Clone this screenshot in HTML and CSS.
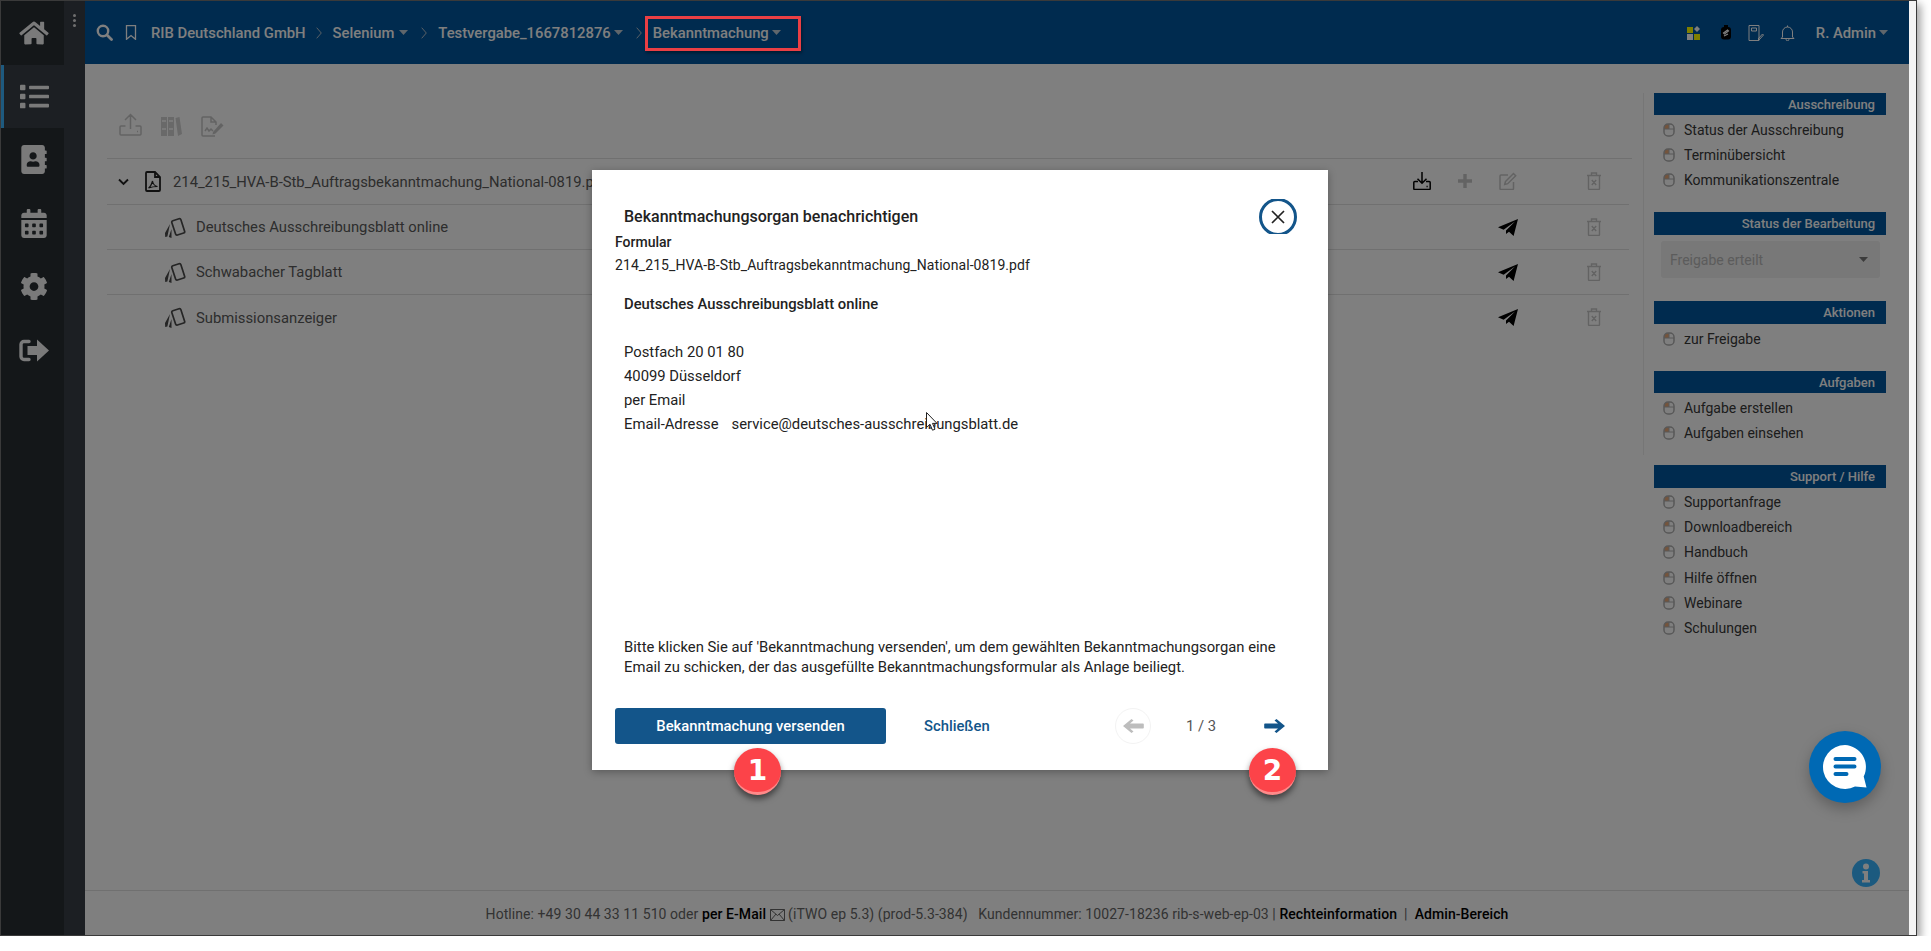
FILE: index.html
```html
<!DOCTYPE html>
<html lang="de">
<head>
  <meta charset="UTF-8">
  <title>Bekanntmachung</title>
  <link rel="stylesheet" href="styles.css">
</head>
<body>
  <svg class="defs" width="0" height="0">
    <symbol id="i-mouse" viewBox="0 0 12 14">
      <path d="M1 6h5V1H5a4 4 0 0 0-4 4z" fill="#e8a878"/>
      <rect x="1" y="1" width="10" height="12" rx="4" fill="none" stroke="#b0b0b0" stroke-width="1.500"/>
      <path d="M1 6h10M6 1v5" stroke="#b0b0b0" stroke-width="1"/>
    </symbol>
    <symbol id="i-trash" viewBox="0 0 16 18">
      <path d="M1 3.500h14M5.500 3.500V1h5v2.500M2.500 3.500v13a1 1 0 0 0 1 1h9a1 1 0 0 0 1-1v-13M5.800 8l4.400 5M10.200 8l-4.400 5" fill="none" stroke="#c6c6c6" stroke-width="1.400"/>
    </symbol>
    <symbol id="i-plane" viewBox="0 0 20 17">
      <path d="M20 0 0 8.200l5.600 2.600L17 2.400 8 11.600V15l3-2.200 4.600 4.200z"/>
    </symbol>
    <symbol id="i-organ" viewBox="0 0 22 21">
      <rect x="9.500" y="2.500" width="9.500" height="15" rx="1.500" transform="rotate(-18 14 10)" fill="none" stroke="#4a4a4a" stroke-width="1.700"/>
      <path d="M6 7 1 16l.2 4 2.200-.4zM7.500 12 4.800 20l2.700.9z" fill="#4a4a4a"/>
    </symbol>
    <symbol id="i-caret" viewBox="0 0 9 5">
      <path d="M0 0h9L4.500 5z"/>
    </symbol>
    <symbol id="i-sep" viewBox="0 0 6 12">
      <path d="M.7.700 5.300 6 .7 11.300" fill="none" stroke="#b4c0cc" stroke-width="1"/>
    </symbol>
    <symbol id="i-arrow" viewBox="0 0 21 14">
      <path d="M10.500 1.500 12.500 0 21 7l-8.500 7-2-1.500L14 9.500H1a.8.8 0 0 1-.8-.8V5.300A.8.8 0 0 1 1 4.500h13z"/>
    </symbol>
  </svg>

  <div class="window">
    <div class="app">
      <nav class="sidebar">
        <div class="nav-icons">
          <a class="nav-item"><svg width="30" height="26" viewBox="0 0 576 512"><path d="M280.37 148.26L96 300.11V464a16 16 0 0 0 16 16l112.06-.29a16 16 0 0 0 15.92-16V368a16 16 0 0 1 16-16h64a16 16 0 0 1 16 16v95.64a16 16 0 0 0 16 16.05L464 480a16 16 0 0 0 16-16V300L295.67 148.26a12.19 12.19 0 0 0-15.3 0zM571.6 251.47L488 182.56V44.05a12 12 0 0 0-12-12h-56a12 12 0 0 0-12 12v72.61L318.47 43a48 48 0 0 0-61 0L4.34 251.47a12 12 0 0 0-1.6 16.9l25.5 31A12 12 0 0 0 45.15 301l235.22-193.74a12.19 12.19 0 0 1 15.3 0L530.9 301a12 12 0 0 0 16.9-1.6l25.5-31a12 12 0 0 0-1.7-16.93z"/></svg></a>
          <a class="nav-item nav-item--active"><svg width="29" height="29" viewBox="0 0 512 512"><path d="M80 368H16a16 16 0 0 0-16 16v64a16 16 0 0 0 16 16h64a16 16 0 0 0 16-16v-64a16 16 0 0 0-16-16zm0-320H16A16 16 0 0 0 0 64v64a16 16 0 0 0 16 16h64a16 16 0 0 0 16-16V64a16 16 0 0 0-16-16zm0 160H16a16 16 0 0 0-16 16v64a16 16 0 0 0 16 16h64a16 16 0 0 0 16-16v-64a16 16 0 0 0-16-16zm416 176H176a16 16 0 0 0-16 16v32a16 16 0 0 0 16 16h320a16 16 0 0 0 16-16v-32a16 16 0 0 0-16-16zm0-320H176a16 16 0 0 0-16 16v32a16 16 0 0 0 16 16h320a16 16 0 0 0 16-16V80a16 16 0 0 0-16-16zm0 160H176a16 16 0 0 0-16 16v32a16 16 0 0 0 16 16h320a16 16 0 0 0 16-16v-32a16 16 0 0 0-16-16z"/></svg></a>
          <a class="nav-item"><svg width="26" height="29" viewBox="0 0 448 512"><path d="M436 160c6.600 0 12-5.400 12-12v-40c0-6.600-5.400-12-12-12h-20V48c0-26.500-21.500-48-48-48H48C21.500 0 0 21.500 0 48v416c0 26.500 21.500 48 48 48h320c26.500 0 48-21.500 48-48v-48h20c6.600 0 12-5.400 12-12v-40c0-6.600-5.400-12-12-12h-20v-64h20c6.600 0 12-5.400 12-12v-40c0-6.600-5.400-12-12-12h-20v-64h20zm-228-32c35.300 0 64 28.700 64 64s-28.700 64-64 64-64-28.700-64-64 28.700-64 64-64zm112 236.800c0 10.600-10 19.200-22.400 19.200H118.400C106 384 96 375.400 96 364.800v-19.200c0-31.800 30.100-57.600 67.200-57.600h5c12.300 5.100 25.700 8 39.800 8s27.600-2.900 39.800-8h5c37.100 0 67.200 25.800 67.200 57.600v19.200z"/></svg></a>
          <a class="nav-item"><svg width="26" height="29" viewBox="0 0 448 512"><path d="M0 464c0 26.500 21.500 48 48 48h352c26.500 0 48-21.500 48-48V192H0v272zm320-196c0-6.600 5.400-12 12-12h40c6.600 0 12 5.400 12 12v40c0 6.600-5.400 12-12 12h-40c-6.600 0-12-5.400-12-12v-40zm0 128c0-6.600 5.400-12 12-12h40c6.600 0 12 5.400 12 12v40c0 6.600-5.400 12-12 12h-40c-6.600 0-12-5.400-12-12v-40zM192 268c0-6.600 5.400-12 12-12h40c6.600 0 12 5.400 12 12v40c0 6.600-5.400 12-12 12h-40c-6.600 0-12-5.400-12-12v-40zm0 128c0-6.600 5.400-12 12-12h40c6.600 0 12 5.400 12 12v40c0 6.600-5.400 12-12 12h-40c-6.600 0-12-5.400-12-12v-40zM64 268c0-6.600 5.400-12 12-12h40c6.600 0 12 5.400 12 12v40c0 6.600-5.400 12-12 12H76c-6.600 0-12-5.400-12-12v-40zm0 128c0-6.600 5.400-12 12-12h40c6.600 0 12 5.400 12 12v40c0 6.600-5.400 12-12 12H76c-6.600 0-12-5.400-12-12v-40zM400 64h-48V16c0-8.800-7.200-16-16-16h-32c-8.800 0-16 7.200-16 16v48H160V16c0-8.800-7.200-16-16-16h-32c-8.800 0-16 7.200-16 16v48H48C21.500 64 0 85.500 0 112v48h448v-48c0-26.500-21.500-48-48-48z"/></svg></a>
          <a class="nav-item"><svg width="28" height="29" viewBox="0 0 512 512"><path d="M487.400 315.700l-42.600-24.600c4.300-23.200 4.300-47 0-70.200l42.600-24.600c4.900-2.800 7.100-8.600 5.500-14-11.100-35.600-30-67.800-54.700-94.600-3.800-4.100-10-5.100-14.800-2.300L380.800 110c-17.900-15.400-38.500-27.300-60.800-35.100V25.800c0-5.600-3.900-10.500-9.400-11.700-36.700-8.200-74.300-7.800-109.200 0-5.500 1.200-9.400 6.100-9.400 11.700V75c-22.200 7.900-42.800 19.800-60.800 35.100L88.700 85.500c-4.900-2.800-11-1.900-14.800 2.300-24.700 26.700-43.600 58.900-54.700 94.600-1.700 5.400.6 11.200 5.500 14L67.300 221c-4.300 23.200-4.300 47 0 70.200l-42.600 24.600c-4.900 2.800-7.100 8.600-5.500 14 11.100 35.600 30 67.800 54.700 94.600 3.800 4.100 10 5.100 14.800 2.300l42.600-24.600c17.900 15.400 38.500 27.300 60.800 35.100v49.200c0 5.600 3.900 10.500 9.400 11.700 36.700 8.200 74.300 7.800 109.200 0 5.500-1.200 9.400-6.100 9.400-11.700v-49.200c22.200-7.900 42.800-19.800 60.800-35.100l42.600 24.600c4.900 2.800 11 1.900 14.800-2.300 24.700-26.700 43.600-58.900 54.700-94.600 1.500-5.500-.7-11.300-5.600-14.100zM256 336c-44.100 0-80-35.900-80-80s35.900-80 80-80 80 35.900 80 80-35.900 80-80 80z"/></svg></a>
          <a class="nav-item"><svg width="30" height="23" viewBox="0 0 30 23"><path d="M10 2.500H5a3 3 0 0 0-3 3v12a3 3 0 0 0 3 3h5" fill="none" stroke="#f4f4f4" stroke-width="3.400" stroke-linecap="round"/><path d="M18 .5 30 11.500 18 22.500V16H8.500V7H18z"/></svg></a>
        </div>
        <div class="nav-strip"><span class="nav-dots"></span></div>
      </nav>

      <div class="main">
        <header class="topbar">
          <svg class="tb-search" width="17" height="17" viewBox="0 0 17 17"><circle cx="7" cy="7" r="5.200" fill="none" stroke="#fff" stroke-width="2.400"/><path d="m11 11 4.500 4.500" stroke="#fff" stroke-width="2.800" stroke-linecap="round"/></svg>
          <svg class="tb-mark" width="14" height="15" viewBox="0 0 14 15"><path d="M2.500.7h9v13.600L7 10.600l-4.500 3.700z" fill="none" stroke="#fff" stroke-width="1.300"/></svg>
          <span class="crumb">RIB Deutschland GmbH</span>
          <svg class="crumb-sep" width="6" height="12"><use href="#i-sep"/></svg>
          <span class="crumb crumb--project">Selenium</span>
          <svg class="crumb-caret" width="9" height="5"><use href="#i-caret"/></svg>
          <svg class="crumb-sep" width="6" height="12"><use href="#i-sep"/></svg>
          <span class="crumb">Testvergabe_1667812876</span>
          <svg class="crumb-caret" width="9" height="5"><use href="#i-caret"/></svg>
          <svg class="crumb-sep" width="6" height="12"><use href="#i-sep"/></svg>
          <span class="crumb">Bekanntmachung</span>
          <svg class="crumb-caret" width="9" height="5"><use href="#i-caret"/></svg>

          <div class="tb-right">
            <svg class="tb-apps" width="14" height="14" viewBox="0 0 14 14"><rect width="6" height="6" y="1" fill="#ffff00"/><rect x="0" y="8" width="6" height="6" fill="#fff"/><rect x="7" y="8" width="6" height="6" fill="#ffff00"/><path d="M10 0l3 3-3 3-3-3z" fill="#fff"/></svg>
            <svg width="12" height="15" viewBox="0 0 12 15"><rect x="1" y="2" width="10" height="12.500" rx="3" fill="#000"/><path d="M4 1h4" stroke="#000" stroke-width="2"/><path d="M3.500 8l4-3 1 1-4 3zM4 11l4-2" stroke="#fff" stroke-width="1.200"/></svg>
            <svg width="16" height="16" viewBox="0 0 16 16"><path d="M1 .5h10v15H1zM3.500 3h5v3h-5zM10 14l4.500-5 1 1-4.500 5z" fill="none" stroke="#fff" stroke-width="1"/></svg>
            <svg width="15" height="16" viewBox="0 0 15 16"><path d="M2.500 12V7a5 5 0 0 1 10 0v5l1.500 1.500H1zM6 14.200a1.500 1.500 0 0 0 3 0M7.500 2V.5" fill="none" stroke="#fff" stroke-width="1"/></svg>
            <span class="tb-user">R. Admin</span>
            <svg class="crumb-caret" width="9" height="5"><use href="#i-caret"/></svg>
          </div>
        </header>

        <div class="content">
          <section class="docs">
            <div class="toolbar">
              <svg width="23" height="23" viewBox="0 0 23 23"><path d="M11.500 16V1.500M6 7l5.500-5.500L17 7M6.500 13H2a1 1 0 0 0-1 1v7a1 1 0 0 0 1 1h19a1 1 0 0 0 1-1v-7a1 1 0 0 0-1-1h-4.500M18 18.500h1" fill="none" stroke="#c6c6c6" stroke-width="1.500"/></svg>
              <svg class="tool-low" width="21" height="20" viewBox="0 0 21 20"><path d="M0 1h6v19H0zM7 1h6v19H7zM14.500 2l4-1 2.500 17-4 2z" fill="#d2d2d2"/><path d="M1 5h4M8 5h4M1 13h4M8 13h4" stroke="#fff" stroke-width="1.500"/></svg>
              <svg class="tool-low" width="23" height="21" viewBox="0 0 23 21"><path d="M14 20H2a1 1 0 0 1-1-1V2a1 1 0 0 1 1-1h8l5 5v3M10 1v5h5M4 15l2-3 2 3 2-2 2 2" fill="none" stroke="#c6c6c6" stroke-width="1.500"/><path d="M12 16l8-9 2.500 2.500-8 8-3 1z" fill="#c6c6c6"/></svg>
            </div>

            <div class="row row--parent">
              <svg class="row-chevron" width="11" height="8" viewBox="0 0 11 8"><path d="M1 1.500 5.500 6 10 1.500" fill="none" stroke="#222" stroke-width="1.900"/></svg>
              <svg class="row-pdf" width="16" height="21" viewBox="0 0 16 21"><path d="M1 2a1 1 0 0 1 1-1h8l5 5v13a1 1 0 0 1-1 1H2a1 1 0 0 1-1-1zM10 1v5h5" fill="none" stroke="#222" stroke-width="1.800"/><path d="M3.500 17c2-1 3-3.500 4-7 .5 3 2 5 5 5.500-3 0-6 .5-9 1.500z" fill="none" stroke="#222" stroke-width="1.200"/></svg>
              <span class="row-label">214_215_HVA-B-Stb_Auftragsbekanntmachung_National-0819.pdf</span>
              <div class="row-actions">
                <svg width="18" height="18" viewBox="0 0 18 18"><path d="M9 0v11M4.500 6.800 9 11.300l4.500-4.500M5 9.500H1.800a1 1 0 0 0-1 1v6a1 1 0 0 0 1 1h14.400a1 1 0 0 0 1-1v-6a1 1 0 0 0-1-1H13M13.500 14.500h1.200" fill="none" stroke="#000" stroke-width="1.500"/></svg>
                <svg width="14" height="14" viewBox="0 0 14 14"><path d="M7 0v14M0 7h14" stroke="#c6c6c6" stroke-width="3.400"/></svg>
                <svg width="18" height="18" viewBox="0 0 18 18"><path d="M9 3H2a1 1 0 0 0-1 1v12.500a1 1 0 0 0 1 1h11.500a1 1 0 0 0 1-1V10M6.500 9.500 14.500 1.500l2.200 2.200-8 8-3 .8z" fill="none" stroke="#c6c6c6" stroke-width="1.500"/></svg>
                <svg class="col-trash" width="16" height="18"><use href="#i-trash"/></svg>
              </div>
            </div>

            <div class="row row--child">
              <svg class="row-organ" width="22" height="21"><use href="#i-organ"/></svg>
              <span class="row-label">Deutsches Ausschreibungsblatt online</span>
              <div class="row-actions">
                <svg class="col-send" width="20" height="17"><use href="#i-plane"/></svg>
                <svg class="col-trash" width="16" height="18"><use href="#i-trash"/></svg>
              </div>
            </div>
            <div class="row row--child">
              <svg class="row-organ" width="22" height="21"><use href="#i-organ"/></svg>
              <span class="row-label">Schwabacher Tagblatt</span>
              <div class="row-actions">
                <svg class="col-send" width="20" height="17"><use href="#i-plane"/></svg>
                <svg class="col-trash" width="16" height="18"><use href="#i-trash"/></svg>
              </div>
            </div>
            <div class="row row--child row--last">
              <svg class="row-organ" width="22" height="21"><use href="#i-organ"/></svg>
              <span class="row-label">Submissionsanzeiger</span>
              <div class="row-actions">
                <svg class="col-send" width="20" height="17"><use href="#i-plane"/></svg>
                <svg class="col-trash" width="16" height="18"><use href="#i-trash"/></svg>
              </div>
            </div>
          </section>

          <aside class="side">
            <div class="side-top">
              <div class="side-head side-head--short">Ausschreibung</div>
              <ul class="side-list">
                <li><svg width="12" height="14"><use href="#i-mouse"/></svg>Status der Ausschreibung</li>
                <li><svg width="12" height="14"><use href="#i-mouse"/></svg>Terminübersicht</li>
                <li><svg width="12" height="14"><use href="#i-mouse"/></svg>Kommunikationszentrale</li>
              </ul>
              <div class="side-head">Status der Bearbeitung</div>
              <div class="side-select">
                <span>Freigabe erteilt</span>
                <svg width="9" height="5"><use href="#i-caret"/></svg>
              </div>
              <div class="side-head">Aktionen</div>
              <ul class="side-list">
                <li><svg width="12" height="14"><use href="#i-mouse"/></svg>zur Freigabe</li>
              </ul>
              <div class="side-head side-head--short">Aufgaben</div>
              <ul class="side-list side-list--end">
                <li><svg width="12" height="14"><use href="#i-mouse"/></svg>Aufgabe erstellen</li>
                <li><svg width="12" height="14"><use href="#i-mouse"/></svg>Aufgaben einsehen</li>
              </ul>
            </div>
            <div class="side-bottom">
              <div class="side-head">Support / Hilfe</div>
              <ul class="side-list">
                <li><svg width="12" height="14"><use href="#i-mouse"/></svg>Supportanfrage</li>
                <li><svg width="12" height="14"><use href="#i-mouse"/></svg>Downloadbereich</li>
                <li><svg width="12" height="14"><use href="#i-mouse"/></svg>Handbuch</li>
                <li><svg width="12" height="14"><use href="#i-mouse"/></svg>Hilfe öffnen</li>
                <li><svg width="12" height="14"><use href="#i-mouse"/></svg>Webinare</li>
                <li><svg width="12" height="14"><use href="#i-mouse"/></svg>Schulungen</li>
              </ul>
            </div>
          </aside>
        </div>

        <svg class="info-icon" width="28" height="28" viewBox="0 0 28 28"><circle cx="14" cy="14" r="14" fill="#38b4ff"/><circle cx="14" cy="7.500" r="3" fill="#fff"/><path d="M10.500 12h5.500v9h2v2.500H10V21h2v-6.500h-1.500z" fill="#fff"/></svg>

        <footer class="footer">
          Hotline: +49 30 44 33 11 510 oder <b>per E-Mail</b>
          <svg class="footer-mail" width="15" height="12" viewBox="0 0 15 12"><path d="M.5.500h14v11H.5zM.5.500l7 6 7-6M.5 11.500l5.500-6.500M14.500 11.500 9 5" fill="none" stroke="#666" stroke-width="1"/></svg>
          (iTWO ep 5.3) (prod-5.3-384) &nbsp; Kundennummer: 10027-18236 rib-s-web-ep-03 | <b>Rechteinformation</b> &nbsp;|&nbsp; <b>Admin-Bereich</b>
        </footer>
      </div>
      <div class="backdrop"></div>
    </div>

    <div class="annotation-box"></div>

    <div class="modal">
      <h2 class="modal-title">Bekanntmachungsorgan benachrichtigen</h2>
      <div class="close-clip"><span class="close-btn"><svg width="14" height="14" viewBox="0 0 14 14"><path d="M1 1l12 12M13 1 1 13" stroke="#222" stroke-width="1.700"/></svg></span></div>
      <div class="modal-label">Formular</div>
      <div class="modal-file">214_215_HVA-B-Stb_Auftragsbekanntmachung_National-0819.pdf</div>
      <div class="modal-address">
        <strong>Deutsches Ausschreibungsblatt online</strong><br><br>
        Postfach 20 01 80<br>
        40099 Düsseldorf<br>
        per Email<br>
        <span class="address-key">Email-Adresse</span>service@deutsches-ausschreibungsblatt.de
      </div>
      <p class="modal-note">Bitte klicken Sie auf 'Bekanntmachung versenden', um dem gewählten Bekanntmachungsorgan eine Email zu schicken, der das ausgefüllte Bekanntmachungsformular als Anlage beiliegt.</p>
      <div class="modal-actions">
        <button class="btn-primary">Bekanntmachung versenden</button>
        <a class="btn-link">Schließen</a>
        <div class="pager">
          <span class="pager-btn pager-btn--off"><svg class="arrow-left" width="21" height="14"><use href="#i-arrow"/></svg></span>
          <span class="pager-count">1 / 3</span>
          <span class="pager-btn pager-btn--next"><svg width="21" height="14"><use href="#i-arrow"/></svg></span>
        </div>
      </div>
    </div>

    <svg class="cursor" width="12" height="19" viewBox="0 0 12 19"><path d="M.5.500v15l3.500-3.300 2.500 6 2.500-1-2.500-5.800H11z" fill="#fff" stroke="#222" stroke-width="1"/></svg>

    <span class="step-badge step-badge--one">1</span>
    <span class="step-badge step-badge--two">2</span>

    <div class="chat-btn">
      <svg width="46" height="46" viewBox="0 0 46 46"><path d="M23 1a22 22 0 1 0 10 41.600l11.500 1-2.800-11A22 22 0 0 0 23 1z" fill="#fff"/><path d="M13.500 15h19M13.500 22.500h19M13.500 30h11" stroke="#0069b4" stroke-width="4" stroke-linecap="round"/></svg>
    </div>
  </div>
</body>
</html>
```

FILE: styles.css
```css
* {
  box-sizing: border-box;
}

body {
  margin: 0;
  background: #fff;
  font-family: Roboto, "Liberation Sans", sans-serif;
  font-size: 14px;
  color: #383838;
}

.defs {
  position: absolute;
}

.window {
  position: relative;
  width: 1917px;
  height: 936px;
  padding-right: 7px;
  background: #f4f4f4;
  border: 1px solid #3a3a3a;
  box-shadow: 4px 4px 8px rgba(0, 0, 0, 0.35);
}

.app {
  position: relative;
  display: flex;
  height: 100%;
  background: #fff;
}

.backdrop {
  position: absolute;
  inset: 0;
  background: rgba(0, 0, 0, 0.5);
}

/* sidebar */
.sidebar {
  display: flex;
  width: 84px;
  flex: none;
}

.nav-icons {
  width: 63px;
  background: #282e32;
}

.nav-strip {
  width: 21px;
  background: #383e46;
  padding: 13px 0 0 9px;
}

.nav-dots {
  display: block;
  width: 3px;
  height: 3px;
  border-radius: 50%;
  background: #ddd;
  box-shadow: 0 5px 0 #ddd, 0 10px 0 #ddd;
}

.nav-item {
  display: flex;
  align-items: center;
  justify-content: center;
  height: 63.500px;
  padding-left: 2px;
}

.nav-item svg {
  fill: #f4f4f4;
}

.nav-item--active {
  background: #383e46;
  border-left: 3px solid #3cb4ff;
  padding-left: 0;
}

/* top bar */
.main {
  position: relative;
  flex: 1;
  display: flex;
  flex-direction: column;
  min-width: 0;
}

.topbar {
  display: flex;
  align-items: center;
  flex: none;
  height: 63px;
  padding-left: 11px;
  background: #00569e;
  color: #fff;
  font-size: 14.800px;
  font-weight: 500;
  white-space: nowrap;
}

.tb-mark {
  margin: 0 13px 0 11px;
}

.crumb--project {
  margin-right: 2px;
}

.crumb-caret {
  margin-left: 3px;
  fill: #c0ccd6;
}

.crumb-sep {
  margin: 0 11px 0 10px;
}

.crumb-caret + .crumb-sep {
  margin-left: 13px;
}

.tb-right {
  display: flex;
  align-items: center;
  gap: 16px;
  margin-left: auto;
  padding-right: 21px;
}

.tb-apps {
  margin-right: 3px;
}

.tb-user {
  margin-left: 5px;
}

.tb-right .crumb-caret {
  margin-left: -13px;
}

/* document list */
.content {
  display: flex;
  flex: 1;
  padding: 29px 0 0 22px;
}

.docs {
  width: 1525px;
  flex: none;
  padding-top: 20px;
}

.toolbar {
  display: flex;
  gap: 19px;
  align-items: flex-start;
  height: 45px;
  padding-left: 12px;
}

.tool-low {
  margin-top: 3px;
}

.row {
  position: relative;
  display: flex;
  align-items: center;
  height: 45px;
  border-top: 1px solid #e0e0e0;
  font-size: 14.800px;
  color: #5a5a5a;
  white-space: nowrap;
}

.row--parent {
  height: 46px;
  padding: 0 17px 0 11px;
}

.row--parent .row-actions {
  margin-top: -2px;
}

.row--child {
  margin-right: 3px;
  padding: 0 14px 0 57px;
}

.row--last .row-label {
  margin-top: 2px;
}

.row-chevron {
  margin-right: 16px;
}

.row-pdf {
  margin-right: 12px;
}

.row-organ {
  margin-right: 10px;
}

.row-actions {
  display: grid;
  grid-template-columns: repeat(5, 43px);
  justify-items: center;
  align-items: center;
  margin-left: auto;
}

.col-send {
  grid-column: 3;
}

.col-trash {
  grid-column: 5;
}

/* right panel */
.side {
  width: 243px;
  margin-left: 11px;
}

.side-top {
  padding: 0 0 10px 10px;
  border-left: 1px solid #ececec;
}

.side-bottom {
  padding: 10px 0 0 11px;
}

.side-bottom .side-list {
  padding-top: 1px;
}

.side-bottom .side-list li {
  height: 25.300px;
}

.side-head {
  display: flex;
  align-items: center;
  justify-content: flex-end;
  width: 232px;
  height: 23px;
  padding-right: 11px;
  background: #00569e;
  color: #fff;
  font-weight: 500;
  font-size: 13px;
}

.side-head--short {
  height: 22px;
}

.side-list {
  list-style: none;
  margin: 0 0 20px;
  padding: 2px 0 0 9px;
  color: #383838;
}

.side-list--end {
  margin-bottom: 0;
}

.side-list li {
  display: flex;
  align-items: center;
  gap: 9px;
  height: 25px;
}

.side-select {
  display: flex;
  align-items: center;
  justify-content: space-between;
  width: 219px;
  height: 37px;
  margin: 6px 0 23px 7px;
  padding: 0 12px 0 9px;
  background: #f0f0f0;
  border-radius: 3px;
  color: #b8b8b8;
}

.side-select svg {
  fill: #777;
}

/* footer */
.info-icon {
  position: absolute;
  right: 29px;
  bottom: 48px;
}

.footer {
  flex: none;
  height: 45px;
  padding-top: 2px;
  border-top: 1px solid #e0e0e0;
  line-height: 42px;
  letter-spacing: 0.07px;
  text-align: center;
  color: #666;
  white-space: nowrap;
}

.footer b {
  font-weight: 500;
  color: #000;
}

.footer-mail {
  vertical-align: -2px;
}

/* overlays */
.annotation-box {
  position: absolute;
  left: 644px;
  top: 15px;
  width: 156px;
  height: 35px;
  border: 3px solid #ea3f44;
  box-shadow: 1px 2px 3px rgba(0, 0, 0, 0.4);
}

.modal {
  position: absolute;
  left: 591px;
  top: 169px;
  display: flex;
  flex-direction: column;
  width: 736px;
  height: 600px;
  padding: 37px 23px 26px;
  background: #fff;
  color: #222;
  font-size: 14.800px;
  box-shadow: 0 2px 8px rgba(0, 0, 0, 0.3);
}

.modal-title {
  margin: 0 0 0 9px;
  font-size: 16px;
  line-height: 20px;
  font-weight: 500;
}

.close-clip {
  position: absolute;
  left: 667px;
  top: 29px;
  width: 38px;
  height: 35px;
  overflow: hidden;
}

.close-btn {
  display: flex;
  align-items: center;
  justify-content: center;
  width: 38px;
  height: 38px;
  margin-top: -1px;
  border: 3px solid #13558a;
  border-radius: 50%;
}

.modal-label {
  margin-top: 5px;
  font-size: 14px;
  line-height: 20px;
  font-weight: 500;
}

.modal-file {
  margin-top: 3px;
  font-size: 14px;
  line-height: 20px;
  letter-spacing: 0.07px;
}

.modal-address {
  margin: 17px 0 0 9px;
  line-height: 24px;
}

.modal-address strong {
  font-weight: 500;
}

.address-key {
  margin-right: 13px;
}

.modal-note {
  width: 670px;
  margin: auto 0 0 9px;
  line-height: 20px;
}

.modal-actions {
  display: flex;
  align-items: center;
  margin-top: 31px;
}

.btn-primary {
  width: 271px;
  height: 36px;
  border: 0;
  border-radius: 3px;
  background: #13558a;
  color: #fff;
  font: 500 14.800px Roboto, "Liberation Sans", sans-serif;
}

.btn-link {
  margin-left: 38px;
  color: #13558a;
  font-weight: 500;
}

.pager {
  display: flex;
  align-items: center;
  margin: 0 13px 0 auto;
}

.pager-btn {
  display: flex;
  align-items: center;
  justify-content: center;
  width: 36px;
  height: 36px;
  border-radius: 50%;
  fill: #13558a;
}

.pager-btn--off {
  border: 1px solid #f3f3f3;
  fill: #bdbdbd;
}

.arrow-left {
  transform: scaleX(-1);
}

.pager-count {
  width: 105px;
  padding-right: 5px;
  text-align: center;
  color: #555;
}

.cursor {
  position: absolute;
  left: 925px;
  top: 411px;
}

.step-badge {
  position: absolute;
  top: 747px;
  display: flex;
  align-items: center;
  justify-content: center;
  width: 47px;
  height: 47px;
  border-radius: 50%;
  background: #fc4349;
  border-bottom: 3px solid #ff8a8a;
  box-shadow: 0 4px 6px rgba(0, 0, 0, 0.5);
  color: #fff;
  font: 900 28px "DejaVu Sans", sans-serif;
}

.step-badge--one {
  left: 733px;
}

.step-badge--two {
  left: 1248px;
}

.chat-btn {
  position: absolute;
  left: 1808px;
  top: 730px;
  display: flex;
  align-items: center;
  justify-content: center;
  width: 72px;
  height: 72px;
  border-radius: 50%;
  background: #0069b4;
  box-shadow: 0 6px 14px rgba(0, 0, 0, 0.25);
}
```
